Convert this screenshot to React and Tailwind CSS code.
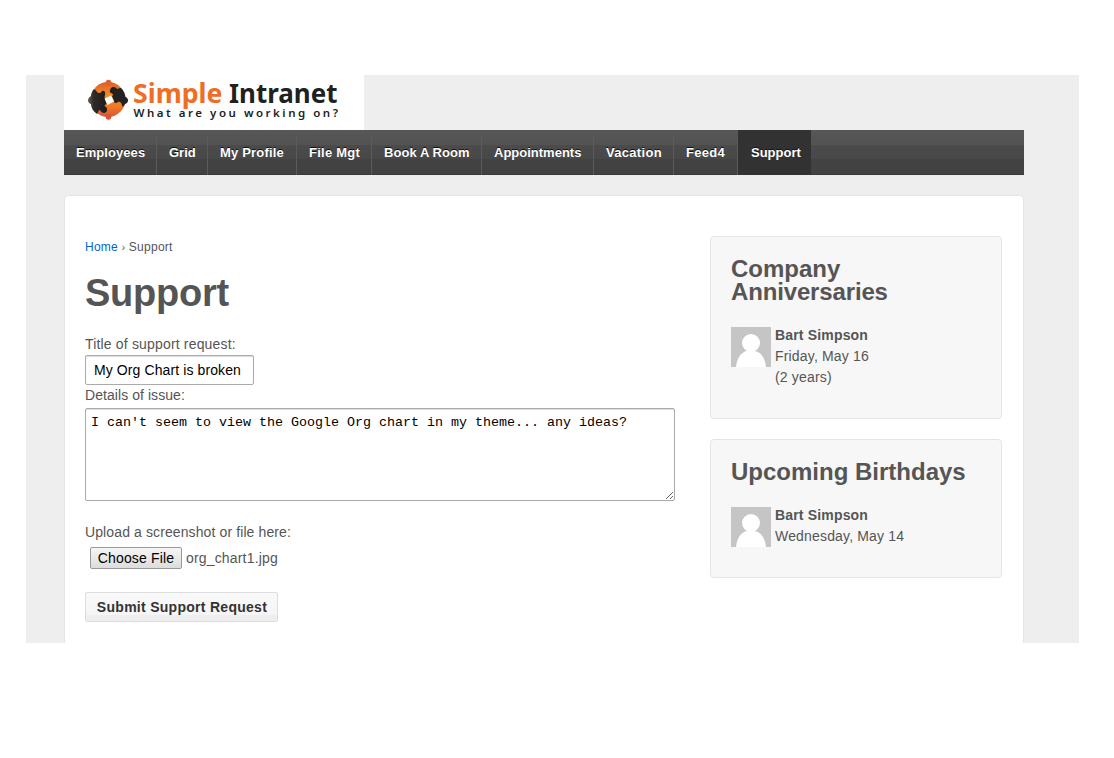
const tabs = [
  ['Employees', 'w-[93px] tracking-[0.06px]'],
  ['Grid', 'w-[51px]'],
  ['My Profile', 'w-[89px] tracking-[0.18px]'],
  ['File Mgt', 'w-[75px] tracking-[0.25px]'],
  ['Book A Room', 'w-[110px] tracking-[0.06px]'],
  ['Appointments', 'w-[112px]'],
  ['Vacation', 'w-[80px] tracking-[0.3px]'],
  ['Feed4', 'w-[64px] tracking-[0.3px]'],
];

function Logo() {
  return (
    <svg className="block" width="300" height="55" viewBox="0 0 300 55" role="img">
      <defs>
        <linearGradient id="orange" x1="0" y1="0" x2="0" y2="1">
          <stop offset="0" stopColor="#dc5c30" />
          <stop offset="0.35" stopColor="#f58a1f" />
          <stop offset="0.7" stopColor="#f07a25" />
          <stop offset="1" stopColor="#d85535" />
        </linearGradient>
        <linearGradient id="dark" x1="0" y1="0" x2="1" y2="0">
          <stop offset="0" stopColor="#6a5a50" />
          <stop offset="0.3" stopColor="#2e2a28" />
          <stop offset="1" stopColor="#1c1b1b" />
        </linearGradient>
      </defs>
      <circle cx="44" cy="24.500" r="17.500" fill="url(#orange)" />
      <circle cx="44.500" cy="7.500" r="2.800" fill="#de5f30" />
      <circle cx="44.500" cy="42" r="2.800" fill="#d85535" />
      <path d="M29 15C31 14 32 15 33 17C35 19 37 18 38 16C40 15 42 17 41 20C40 22 41 22 41 24L42.500 29C40 30 40 31 42 32C44 34 43 38 40 38C37 38 37 35 35 35C34 37 34 38 33 39C29 36 27 33 27 29C23 28 23 23 27 21C27 19 28 17 29 15Z" fill="url(#dark)" />
      <path d="M46.500 14C48 11 52 12 53 14C55 13 56 13 57 13C60 16 61 19 61.500 22C65 23 65 28 61 29C60 31 59 32 58 31C58 28 56 26 54 27C52 29 50 28 50 26L48 21C50 20 49 19 47 18C45 17 46 15 46.500 14Z" fill="#232121" />
      <path d="M40.500 23.500L47 20.500L50 26.500L43.500 30Z" fill="#fff" />
      <text x="69" y="28.300" fontFamily="'Noto Sans', sans-serif" fontSize="26" fontWeight="700" fill="#f06e23" textLength="89.500" lengthAdjust="spacingAndGlyphs">Simple</text>
      <text x="165" y="28.300" fontFamily="'Noto Sans', sans-serif" fontSize="26" fontWeight="700" fill="#221f1f" textLength="108.500" lengthAdjust="spacingAndGlyphs">Intranet</text>
      <text x="69.500" y="42.400" fontFamily="'Noto Sans', sans-serif" fontSize="11.500" fontWeight="600" fill="#221f1f" textLength="204.500">What are you working on?</text>
    </svg>
  );
}

function Avatar() {
  return (
    <svg className="block shrink-0" width="40" height="40" viewBox="0 0 40 40">
      <rect width="40" height="40" fill="#c5c5c5" />
      <circle cx="20" cy="16" r="9" fill="#fff" />
      <path d="M5 40C6 31 10 25 16 24H24C30 25 34 31 35 40Z" fill="#fff" />
    </svg>
  );
}

function Widget({ title, name, lines, className }) {
  return (
    <section className={`w-[292px] rounded-[4px] border border-[#e5e5e5] bg-[#f7f7f7] px-5 pt-5 ${className}`}>
      <h2 className="text-[24px] leading-[23px] font-bold">{title}</h2>
      <div className="mt-6 flex gap-1">
        <Avatar />
        <div className="-mt-[2px] text-[14px] leading-[21px] tracking-[0.170px]">
          <p className="font-bold">{name}</p>
          {lines.map((l) => <p key={l}>{l}</p>)}
        </div>
      </div>
    </section>
  );
}

export default function App() {
  return (
    <div className="h-[758px] w-[1114px] overflow-hidden bg-white pt-[75px] pl-[26px] font-['Liberation_Sans',Arial,sans-serif] text-[14px] text-[#555]">
      <div className="flex h-[568px] w-[1053px] flex-col overflow-hidden bg-[#eee] pl-[38px]">
        <header className="h-[55px] w-[300px] shrink-0 bg-white"><Logo /></header>
        <nav className="flex h-[45px] w-[960px] shrink-0 border-b border-[#393939] bg-[linear-gradient(#585657_0,#535353_15px,#4b4b4b_15px,#484848_29px,#424242_29px,#424242_100%)] text-[13px] leading-[45px] font-bold text-white [text-shadow:0_-1px_0_#111]">
          {tabs.map(([t, w]) => (
            <div key={t} className={`${w} mt-[6px] h-[39px] shrink-0 border-r border-[#5b5b5b] pl-3 leading-[33px] whitespace-nowrap`}>{t}</div>
          ))}
          <div className="h-[45px] w-[73px] bg-[#323232] pl-[13px]">Support</div>
        </nav>
        <main className="mt-5 flex h-[500px] w-[960px] shrink-0 rounded-[4px] border border-[#e5e5e5] bg-white pl-5">
          <div className="w-[625px] pt-[43px] tracking-[0.170px]">
            <p className="text-[12px] leading-4 tracking-[0.260px]"><a className="text-[#06c]">Home</a> <span className="text-[10px]">›</span> Support</p>
            <h1 className="mt-3 text-[38px] leading-[50px] font-bold tracking-[-0.250px]">Support</h1>
            <div className="mt-4 leading-[21px]">Title of support request:</div>
            <input className="block h-[30px] w-[169px] rounded-[2px] border border-[#aaa] bg-white px-2 text-[14px] tracking-[0.100px] text-black shadow-[inset_0_1px_1px_#ddd] outline-none" defaultValue="My Org Chart is broken" />
            <div className="leading-[21px] tracking-[0.060px]">Details of issue:</div>
            <textarea className="mt-[2px] block h-[93px] w-[590px] resize rounded-[2px] border border-[#aaa] bg-white px-[5px] py-[6px] font-['Liberation_Mono','Courier_New',monospace] text-[13.330px] leading-[16px] tracking-normal text-black shadow-[inset_0_1px_1px_#ddd] outline-none" defaultValue="I can't seem to view the Google Org chart in my theme... any ideas?" />
            <div className="mt-[21px] leading-[21px] tracking-[0.110px]">Upload a screenshot or file here:</div>
            <div className="mt-1 ml-[5px] flex h-[22px] items-center gap-1">
              <button className="h-[22px] w-[92px] rounded-[2px] border border-[#999] bg-linear-to-b from-[#f6f6f6] to-[#ddd] text-[14px] leading-[20px] text-black">Choose File</button>
              <span>org_chart1.jpg</span>
            </div>
            <button className="mt-[23px] block h-[30px] w-[193px] rounded-[2px] border border-[#ddd] bg-[linear-gradient(#f9f9f9,#f5f5f5_22px,#eee_22px,#eee)] pl-px text-[14px] font-bold tracking-[0.280px] text-[#333]">Submit Support Request</button>
          </div>
          <aside className="flex flex-col gap-5 pt-10">
            <Widget className="h-[183px]" title={<>Company<br /><span className="tracking-[-0.150px]">Anniversaries</span></>} name="Bart Simpson" lines={['Friday, May 16', '(2 years)']} />
            <Widget className="h-[139px]" title="Upcoming Birthdays" name="Bart Simpson" lines={['Wednesday, May 14']} />
          </aside>
        </main>
      </div>
    </div>
  );
}
